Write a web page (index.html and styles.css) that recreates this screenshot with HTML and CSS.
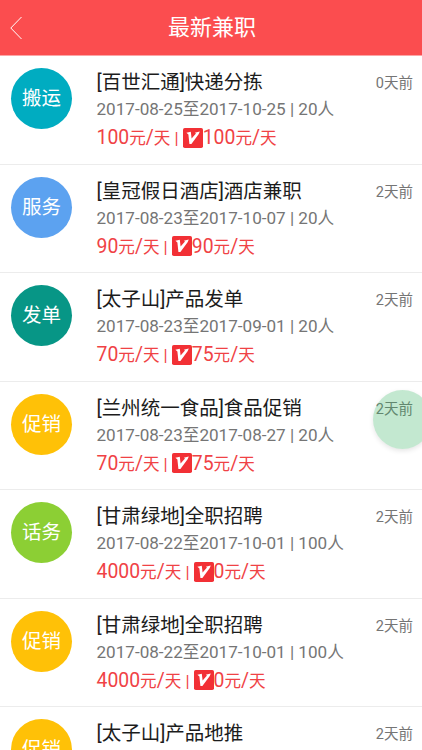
FILE: index.html
```
<!DOCTYPE html>
<html lang="zh-CN">
<head>
    <meta charset="UTF-8">
    <meta name="viewport" content="width=device-width, initial-scale=1.0">
    <title>最新兼职</title>
    <link rel="stylesheet" href="styles.css">
</head>
<body>
    <svg class="defs" width="0" height="0">
        <symbol id="vip" viewBox="0 0 20 20">
            <rect width="20" height="20" rx="1.8" fill="#f23035"/>
            <path d="M3.4 4.8 L7.8 3.8 L8.6 10.4 L13 5.4 L11.8 4.8 L16.8 3.4 L15.6 6.2 L8.4 16 L6.4 16 L5.4 6.4 Z" fill="#fff"/>
        </symbol>
    </svg>

    <header class="header">
        <svg class="back" width="12" height="24" viewBox="0 0 12 24">
            <path d="M11.5 1 L0.8 12 L11.5 23" fill="none" stroke="#fff" stroke-width="1"/>
        </svg>
        <h1>最新兼职</h1>
    </header>

    <ul class="job-list">
        <li class="job">
            <div class="type cyan">搬运</div>
            <div class="info">
                <div class="title">[百世汇通]快递分拣</div>
                <div class="date">2017-08-25<i>至</i>2017-10-25 | 20<i>人</i></div>
                <div class="price"><b>100</b>元<b>/</b>天 | <svg class="vip"><use href="#vip"/></svg><b>100</b>元<b>/</b>天</div>
            </div>
            <div class="time">0天前</div>
        </li>
        <li class="job">
            <div class="type blue">服务</div>
            <div class="info">
                <div class="title">[皇冠假日酒店]酒店兼职</div>
                <div class="date">2017-08-23<i>至</i>2017-10-07 | 20<i>人</i></div>
                <div class="price"><b>90</b>元<b>/</b>天 | <svg class="vip"><use href="#vip"/></svg><b>90</b>元<b>/</b>天</div>
            </div>
            <div class="time">2天前</div>
        </li>
        <li class="job">
            <div class="type teal">发单</div>
            <div class="info">
                <div class="title">[太子山]产品发单</div>
                <div class="date">2017-08-23<i>至</i>2017-09-01 | 20<i>人</i></div>
                <div class="price"><b>70</b>元<b>/</b>天 | <svg class="vip"><use href="#vip"/></svg><b>75</b>元<b>/</b>天</div>
            </div>
            <div class="time">2天前</div>
        </li>
        <li class="job">
            <div class="type amber">促销</div>
            <div class="info">
                <div class="title">[兰州统一食品]食品促销</div>
                <div class="date">2017-08-23<i>至</i>2017-08-27 | 20<i>人</i></div>
                <div class="price"><b>70</b>元<b>/</b>天 | <svg class="vip"><use href="#vip"/></svg><b>75</b>元<b>/</b>天</div>
            </div>
            <div class="time">2天前</div>
        </li>
        <li class="job">
            <div class="type green">话务</div>
            <div class="info">
                <div class="title">[甘肃绿地]全职招聘</div>
                <div class="date">2017-08-22<i>至</i>2017-10-01 | 100<i>人</i></div>
                <div class="price"><b>4000</b>元<b>/</b>天 | <svg class="vip"><use href="#vip"/></svg><b>0</b>元<b>/</b>天</div>
            </div>
            <div class="time">2天前</div>
        </li>
        <li class="job">
            <div class="type amber">促销</div>
            <div class="info">
                <div class="title">[甘肃绿地]全职招聘</div>
                <div class="date">2017-08-22<i>至</i>2017-10-01 | 100<i>人</i></div>
                <div class="price"><b>4000</b>元<b>/</b>天 | <svg class="vip"><use href="#vip"/></svg><b>0</b>元<b>/</b>天</div>
            </div>
            <div class="time">2天前</div>
        </li>
        <li class="job">
            <div class="type amber">促销</div>
            <div class="info">
                <div class="title">[太子山]产品地推</div>
            </div>
            <div class="time">2天前</div>
        </li>
    </ul>

    <div class="float-ball"></div>
</body>
</html>
```
FILE: styles.css
```
* {
    box-sizing: border-box;
}

html, body {
    margin: 0;
    padding: 0;
    height: 100%;
    overflow: hidden;
    background: #fff;
    font-family: Roboto, "Noto Sans CJK SC", sans-serif;
    font-weight: 400;
}

.defs {
    position: absolute;
}

.header {
    display: flex;
    align-items: center;
    height: 56px;
    padding: 0 10px;
    background: #fb4d4f;
    border-bottom: 1px solid #fca5a6;
    color: #fff;
}

.header h1 {
    flex: 1;
    margin: 0 10px 0 0;
    font-size: 22px;
    line-height: 54px;
    font-weight: 400;
    text-align: center;
}

.back {
    display: block;
}

.job-list {
    margin: 0;
    padding: 0;
    list-style: none;
}

.job {
    display: flex;
    align-items: flex-start;
    height: 108.55px;
    padding: 12px 9px 0 11px;
    border-bottom: 1px solid #ececec;
}

.type {
    width: 61px;
    height: 61px;
    border-radius: 50%;
    color: #fff;
    font-size: 19.5px;
    line-height: 62px;
    text-align: center;
}

.cyan {
    background: #00acc1;
}

.blue {
    background: #5ca2f0;
}

.teal {
    background: #079686;
}

.amber {
    background: #ffc107;
}

.green {
    background: #8ccf34;
}

.info {
    flex: 1;
    margin-left: 24.5px;
    white-space: nowrap;
}

.title {
    height: 28px;
    color: #1c1c1c;
    font-size: 19.5px;
    line-height: 30px;
}

.date {
    height: 26px;
    color: #757575;
    font-size: 17.1px;
    line-height: 26px;
}

.date i {
    font-style: normal;
    font-size: 16.6px;
}

.price {
    display: flex;
    align-items: baseline;
    height: 31px;
    color: #f04245;
    font-size: 16.6px;
    line-height: 31px;
    white-space: pre;
}

.price b {
    font-size: 19.4px;
    font-weight: 400;
}

.vip {
    width: 20px;
    height: 20px;
    align-self: center;
}

.time {
    color: #757575;
    font-size: 14.5px;
    line-height: 31px;
}

.float-ball {
    position: absolute;
    top: 390px;
    left: 373px;
    width: 59px;
    height: 59px;
    border-radius: 50%;
    background: rgba(55, 178, 98, 0.3);
    box-shadow: 0 2px 5px rgba(0, 0, 0, 0.1);
}
```
